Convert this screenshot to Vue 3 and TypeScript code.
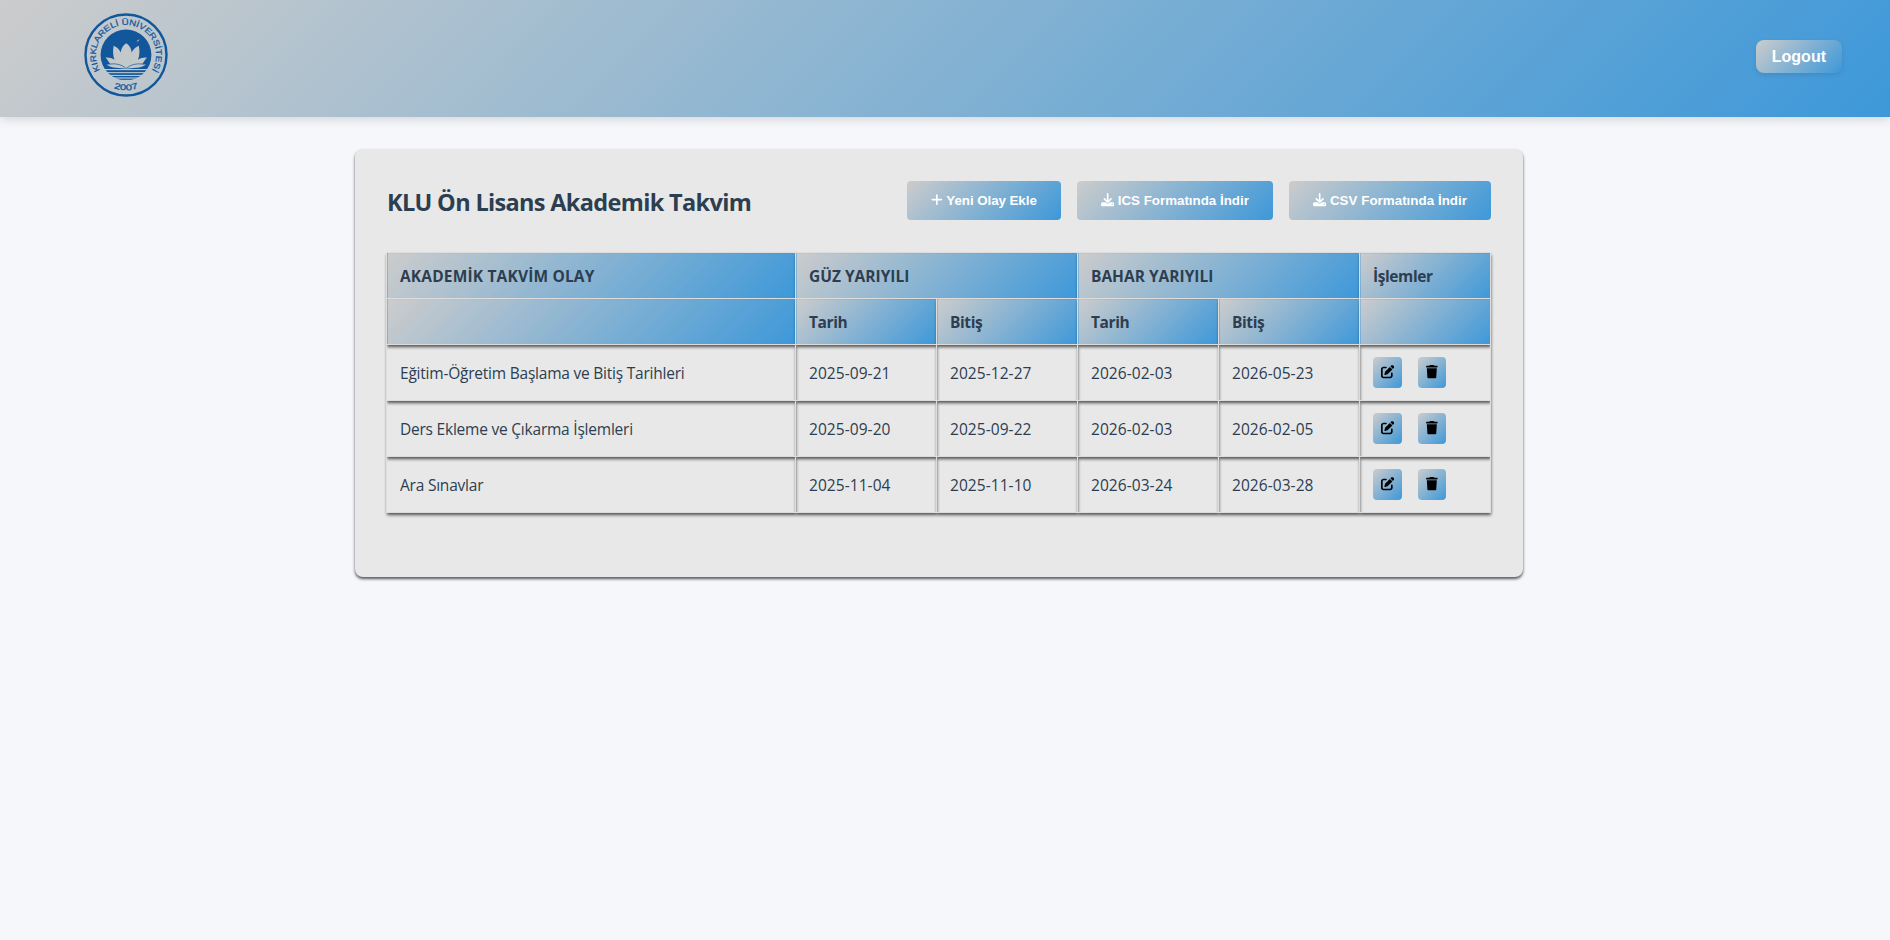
<script setup lang="ts">
interface EventRow {
  id: number
  name: string
  dates: string[]
}

const events: EventRow[] = [
  { id: 1, name: 'Eğitim-Öğretim Başlama ve Bitiş Tarihleri', dates: ['2025-09-21', '2025-12-27', '2026-02-03', '2026-05-23'] },
  { id: 2, name: 'Ders Ekleme ve Çıkarma İşlemleri', dates: ['2025-09-20', '2025-09-22', '2026-02-03', '2026-02-05'] },
  { id: 3, name: 'Ara Sınavlar', dates: ['2025-11-04', '2025-11-10', '2026-03-24', '2026-03-28'] },
]

const downloads: string[] = ['ICS Formatında İndir', 'CSV Formatında İndir']
</script>

<template>
  <div class="page">
    <header class="topbar">
      <svg class="logo" viewBox="0 0 84 84" role="img" aria-label="Kırklareli Üniversitesi">
        <defs>
          <path id="arc-top" d="M20.800 63.200 A30 30 0 1 1 63.200 63.200" />
          <path id="arc-bottom" d="M20 70.500 Q42 84 64 70.500" />
          <clipPath id="disc"><circle cx="42" cy="42" r="25.4" /></clipPath>
        </defs>
        <circle cx="42" cy="42" r="40.5" fill="none" stroke="#12579b" stroke-width="2.4" />
        <g clip-path="url(#disc)" fill="#12579b">
          <rect x="16" y="16" width="52" height="40" />
          <rect x="16" y="57.200" width="52" height="1.900" />
          <rect x="16" y="60.200" width="52" height="1.700" />
          <rect x="16" y="63" width="52" height="1.400" />
          <rect x="16" y="65.600" width="52" height="1.200" />
        </g>
        <g fill="#c3c8cb">
          <path d="M42.200 30.300 C45.500 32.600 47.600 35.500 47.600 39.500 C49 36.500 51.500 34.200 54.800 32.700 C55.800 37 55.700 42.500 54 46.800 C56.500 45 59.500 44.300 63 44.500 C61 46.500 60 49.200 58 51.200 C59 51.500 60.500 51.500 62 51.500 C57.500 55.800 47.500 54.500 42.200 56 C37 54.500 27 55.800 22.500 51.500 C24 51.500 25.500 51.500 26.500 51.200 C24.500 49.200 23.500 46.500 21.500 44.500 C25 44.300 28 45 30.500 46.800 C28.800 42.500 28.700 37 29.700 32.700 C33 34.200 35.500 36.500 36.900 39.500 C36.900 35.500 39 32.600 42.200 30.300Z" />
          <path d="M52.600 29.200 l1.300 -1.900 1.900 -1.400 -1.200 1.900 Z" />
        </g>
        <path d="M26 51 Q36 49.800 42.200 55.500 Q48.500 49.800 58.500 51" fill="none" stroke="#12579b" stroke-width=".7" />
        <text class="logo-text"><textPath href="#arc-top" startOffset="50%" text-anchor="middle" textLength="126" lengthAdjust="spacingAndGlyphs">KIRKLARELİ ÜNİVERSİTESİ</textPath></text>
        <text class="logo-text"><textPath href="#arc-bottom" startOffset="50%" text-anchor="middle" textLength="25" lengthAdjust="spacingAndGlyphs">2007</textPath></text>
      </svg>
      <button class="logout" type="button">Logout</button>
    </header>

    <main class="card">
      <div class="card-head">
        <h2>KLU Ön Lisans Akademik Takvim</h2>
        <div class="actions">
          <button class="action add" type="button">
            <svg class="icon narrow" viewBox="0 0 448 512"><path d="M256 80c0-17.700-14.300-32-32-32s-32 14.300-32 32v144H48c-17.700 0-32 14.300-32 32s14.300 32 32 32h144v144c0 17.700 14.300 32 32 32s32-14.300 32-32V288h144c17.700 0 32-14.300 32-32s-14.300-32-32-32H256V80z" /></svg>
            Yeni Olay Ekle
          </button>
          <button v-for="label in downloads" :key="label" class="action" type="button">
            <svg class="icon" viewBox="0 0 512 512"><path d="M288 32c0-17.700-14.300-32-32-32s-32 14.300-32 32v242.700l-73.400-73.400c-12.500-12.500-32.800-12.500-45.300 0s-12.500 32.800 0 45.300l128 128c12.500 12.500 32.800 12.500 45.300 0l128-128c12.500-12.500 12.500-32.800 0-45.300s-32.800-12.500-45.300 0L288 274.700V32zM64 352c-35.300 0-64 28.700-64 64v32c0 35.300 28.700 64 64 64h384c35.300 0 64-28.700 64-64v-32c0-35.300-28.700-64-64-64H346.500l-45.300 45.300c-25 25-65.500 25-90.500 0L165.500 352H64zm368 56a24 24 0 1 1 0 48 24 24 0 1 1 0-48z" /></svg>
            {{ label }}
          </button>
        </div>
      </div>

      <table>
        <colgroup>
          <col class="col-name" />
          <col v-for="n in 4" :key="n" class="col-date" />
          <col class="col-ops" />
        </colgroup>
        <thead>
          <tr>
            <th class="wide">AKADEMİK TAKVİM OLAY</th>
            <th colspan="2">GÜZ YARIYILI</th>
            <th colspan="2">BAHAR YARIYILI</th>
            <th class="tight">İşlemler</th>
          </tr>
          <tr>
            <th></th>
            <th class="tight">Tarih</th>
            <th class="tight">Bitiş</th>
            <th class="tight">Tarih</th>
            <th class="tight">Bitiş</th>
            <th></th>
          </tr>
        </thead>
        <tbody>
          <tr v-for="event in events" :key="event.id">
            <td class="name">{{ event.name }}</td>
            <td v-for="(date, i) in event.dates" :key="i" class="date">{{ date }}</td>
            <td class="ops-cell">
              <div class="ops">
                <button type="button" aria-label="Düzenle">
                  <svg class="icon" viewBox="0 0 512 512"><path d="M471.600 21.700c-21.900-21.900-57.300-21.900-79.200 0L362.300 51.700l97.900 97.900 30.100-30.100c21.900-21.900 21.900-57.300 0-79.200L471.600 21.700zm-299.200 220c-6.100 6.100-10.800 13.600-13.500 21.900l-29.600 88.800c-2.900 8.600-.6 18.100 5.800 24.600s15.900 8.700 24.600 5.800l88.800-29.600c8.200-2.700 15.700-7.400 21.900-13.500L437.700 172.300 339.700 74.300 172.400 241.700zM96 64C43 64 0 107 0 160v256c0 53 43 96 96 96h256c53 0 96-43 96-96v-96c0-17.700-14.300-32-32-32s-32 14.300-32 32v96c0 17.700-14.300 32-32 32H96c-17.700 0-32-14.300-32-32V160c0-17.700 14.300-32 32-32h96c17.700 0 32-14.300 32-32s-14.300-32-32-32H96z" /></svg>
                </button>
                <button type="button" aria-label="Sil">
                  <svg class="icon narrow" viewBox="0 0 448 512"><path d="M135.200 17.700L128 32H32C14.300 32 0 46.300 0 64s14.300 32 32 32h384c17.700 0 32-14.300 32-32s-14.300-32-32-32h-96l-7.200-14.300C307.400 6.800 296.300 0 284.200 0H163.800c-12.100 0-23.200 6.800-28.600 17.700zM416 128H32l21.200 339c1.600 25.300 22.600 45 47.900 45h245.800c25.300 0 46.300-19.700 47.900-45L416 128z" /></svg>
                </button>
              </div>
            </td>
          </tr>
        </tbody>
      </table>
    </main>
  </div>
</template>

<style>
body {
  margin: 0;
  background: #f5f7fb;
}
</style>

<style scoped>
.page {
  min-height: 100vh;
  background: #f5f7fb;
}
.topbar {
  box-sizing: border-box;
  height: 117px;
  padding: 0 48px 0 84px;
  display: flex;
  justify-content: space-between;
  align-items: flex-start;
  background: linear-gradient(135deg, #ccc, #3d98d9);
  box-shadow: 0 2px 10px rgba(0, 0, 0, 0.15);
}
.logo {
  width: 84px;
  height: 84px;
  margin-top: 13px;
}
.logo-text {
  font: 400 8.200px "Liberation Sans", Arial, sans-serif;
  fill: #12579b;
  stroke: #12579b;
  stroke-width: 0.25;
}
.logout {
  margin-top: 40px;
  height: 33px;
  padding: 0 16px;
  border: 0;
  border-radius: 8px;
  background: linear-gradient(135deg, #ccc, #3d98d9);
  box-shadow: 0 2px 5px rgba(0, 0, 0, 0.1);
  color: #fff;
  font: bold 16px "Liberation Sans", Arial, sans-serif;
}
.card {
  box-sizing: border-box;
  width: 1168px;
  height: 428px;
  margin: 32px 0 0 355px;
  padding: 32px;
  border-radius: 8px;
  background: #e8e8e8;
  color: #2c3e50;
  box-shadow: 0 2px 3px rgba(0, 0, 0, 0.65);
  font-family: "Open Sans", "Noto Sans", sans-serif;
}
.card-head {
  display: flex;
  justify-content: space-between;
  align-items: flex-start;
  height: 71px;
}
h2 {
  margin: 5px 0 0;
  font-size: 23.500px;
  line-height: 33px;
  letter-spacing: -0.660px;
  white-space: nowrap;
}
.actions {
  display: flex;
  gap: 16px;
}
.action {
  height: 39px;
  padding: 0 24px;
  border: 0;
  border-radius: 4px;
  background: linear-gradient(135deg, #ccc, #3d98d9);
  color: #fff;
  font: bold 13.333px "Liberation Sans", Arial, sans-serif;
  white-space: nowrap;
}
.action.add {
  letter-spacing: -0.050px;
}
.action:last-child {
  letter-spacing: 0.040px;
}
.icon {
  width: 13.333px;
  height: 13.333px;
  fill: currentColor;
  vertical-align: -1.670px;
}
.narrow {
  width: 11.667px;
}
table {
  width: 1105px;
  margin-left: -1px;
  table-layout: fixed;
  border-collapse: collapse;
}
.col-name {
  width: 409px;
}
.col-date {
  width: 141px;
}
th,
td {
  box-sizing: border-box;
  padding: 2px 12px 0 13px;
  border: 1px solid #ddd;
  box-shadow: 0 2px 3px rgba(0, 0, 0, 0.65);
  text-align: left;
  line-height: 21px;
  white-space: nowrap;
}
th {
  height: 46px;
  background: linear-gradient(135deg, #ccc, #3d98d9);
  font-size: 15.500px;
  font-weight: 700;
}
.wide {
  letter-spacing: 0.170px;
}
.tight {
  letter-spacing: -0.400px;
}
td {
  height: 56px;
  font-size: 15.500px;
}
.name {
  letter-spacing: -0.220px;
}
.date {
  letter-spacing: 0.060px;
}
td.ops-cell {
  padding-top: 0;
}
.ops {
  display: flex;
  gap: 16px;
}
.ops button {
  height: 31px;
  padding: 0 8px;
  border: 0;
  border-radius: 4px;
  background: linear-gradient(135deg, #ccc, #3d98d9);
  color: #000;
  font-size: 13.333px;
  line-height: 15px;
}
</style>
